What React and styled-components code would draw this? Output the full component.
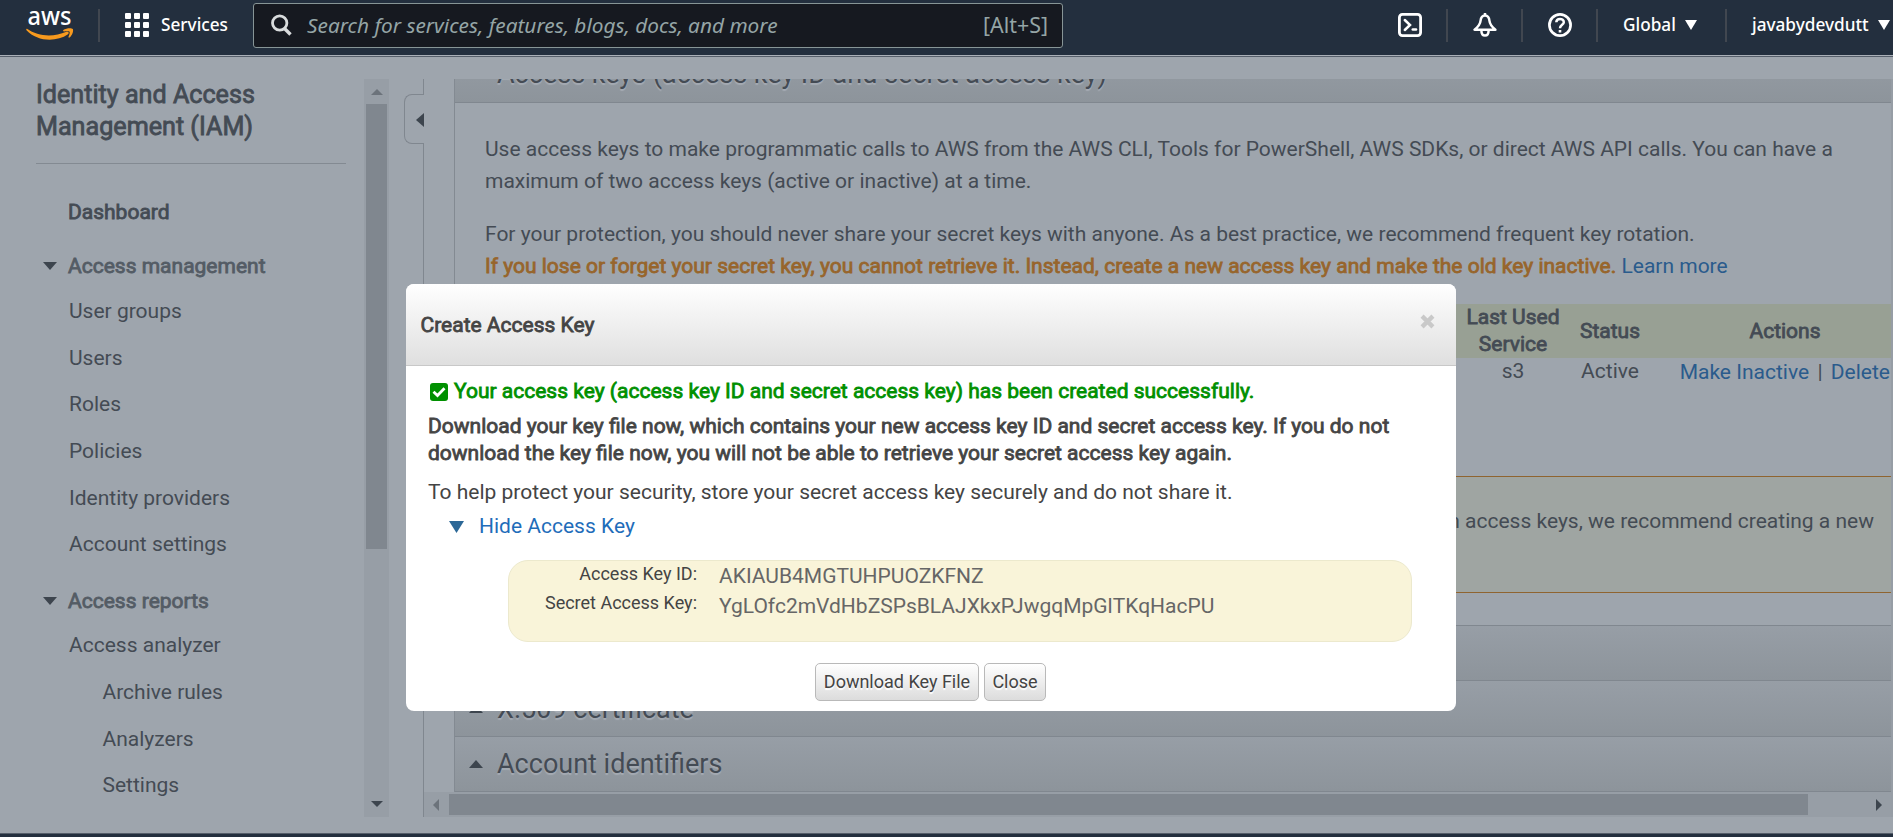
import React from "react";
import styled, { createGlobalStyle, css } from "styled-components";

const Global = createGlobalStyle`
  * { box-sizing: border-box; }
  body { margin: 0; background: #9ea5ad; overflow: hidden; }
  a { text-decoration: none; }
  svg { display: block; flex: none; }
`;

const emphasis = css`
  font-weight: 400;
  -webkit-text-stroke: 0.8px currentColor;
`;

const Page = styled.div`
  position: relative;
  width: 1893px;
  height: 837px;
  overflow: hidden;
  display: flex;
  flex-direction: column;
  background: #9ea5ad;
  color: #444b54;
  font: 400 21px/27px Roboto, "Liberation Sans", sans-serif;
`;

/* ---------- top navigation ---------- */
const TopBar = styled.header`
  height: 55px;
  flex: none;
  display: flex;
  align-items: flex-start;
  padding-top: 3px;
  background: #232f3e;
  color: #fff;
  font: 500 17.2px/24px "Noto Sans", "Open Sans", sans-serif;
`;
const TopRule = styled.div`
  height: 2px;
  flex: none;
  background: #555e6a;
  border-top: 1px solid #a9afb7;
`;
const Logo = styled.div`
  width: 98px;
  padding: 4px 0 0 25px;
`;
const NavDivider = styled.span`
  flex: none;
  width: 2px;
  height: 33px;
  margin-top: 6px;
  background: #414750;
`;
const ServicesButton = styled.div`
  width: 153px;
  height: 44px;
  display: flex;
  align-items: center;
  gap: 12px;
  padding-left: 25px;
`;
const SearchBox = styled.div`
  width: 810px;
  height: 45px;
  display: flex;
  align-items: center;
  padding: 0 14px 2px 17px;
  background: #161920;
  border: 1px solid #879596;
  border-radius: 3px;
  color: #95a5a6;
  font-weight: 400;
  font-size: 20.8px;
`;
const Placeholder = styled.span`
  flex: 1;
  margin-left: 15px;
  font-style: italic;
  white-space: nowrap;
`;
const Shortcut = styled.span`
  font-size: 21.4px;
`;
const NavRight = styled.div`
  flex: 1;
  display: flex;
  justify-content: flex-end;
`;
const NavIcon = styled.div`
  width: 73px;
  height: 44px;
  display: flex;
  align-items: center;
  justify-content: center;
`;
const NavMenu = styled.div`
  width: ${(p) => p.$w}px;
  height: 44px;
  display: flex;
  align-items: center;
  gap: 9px;
  padding-left: 25px;
  white-space: nowrap;
`;

/* ---------- body ---------- */
const Body = styled.div`
  height: 760px;
  margin-top: 22px;
  flex: none;
  display: flex;
  align-items: flex-start;
`;
const Sidebar = styled.aside`
  width: 364px;
  height: 738px;
  padding-left: 36px;
  white-space: nowrap;
`;
const SideTitle = styled.h2`
  ${emphasis}
  width: 310px;
  height: 85px;
  margin: 0 0 33px;
  font-size: 25.15px;
  line-height: 32.2px;
  border-bottom: 1px solid #838a92;
`;
const Dashboard = styled.div`
  ${emphasis}
  height: 30px;
  margin-bottom: 18px;
  padding-left: 32px;
  line-height: 30px;
`;
const NavGroup = styled.div`
  ${emphasis}
  display: flex;
  align-items: center;
  gap: 11px;
  height: 42px;
  margin-top: ${(p) => p.$top || 0}px;
  padding-left: 7px;
  color: #545c65;
`;
const LinkList = styled.div`
  padding-top: ${(p) => p.$top || 0}px;
`;
const NavLink = styled.a`
  display: block;
  height: 46.7px;
  line-height: 46.7px;
  padding-left: ${(p) => (p.$sub ? 66.5 : 33)}px;
  color: #444b54;
`;
const VScroll = styled.div`
  width: 25px;
  height: 738px;
  display: flex;
  flex-direction: column;
  align-items: center;
  justify-content: space-between;
  padding: 10px 0;
  background: #979ea6;
`;
const VThumb = styled.div`
  width: 21px;
  height: 445px;
  margin: 9px 0 auto;
  background: #80878f;
`;
const Rail = styled.div`
  width: 35px;
  height: 738px;
  margin-right: 30px;
  padding-left: 15px;
  display: flex;
  flex-direction: column;
`;
const RailLine = styled.div`
  width: 20px;
  height: ${(p) => p.$h}px;
  border-right: 1px solid #80878f;
`;
const RailTab = styled.div`
  width: 20px;
  height: 50px;
  display: flex;
  align-items: center;
  justify-content: flex-end;
  padding-top: 2px;
  border: 1px solid #80878f;
  border-right: 0;
  border-radius: 8px 0 0 8px;
`;
const MainColumn = styled.main`
  width: 1437px;
  height: 738px;
  display: flex;
  flex-direction: column;
`;
const Panel = styled.div`
  height: 713px;
  overflow: hidden;
  border-left: 1px solid #838a92;
`;
const Section = styled.div`
  height: ${(p) => p.$h || 55}px;
  display: flex;
  align-items: center;
  gap: 14px;
  padding-left: 14px;
  margin-top: ${(p) => p.$top || 0}px;
  background: linear-gradient(#979ea6, #8d949b);
  border-bottom: 1px solid #80878f;
  font-size: 27px;
  line-height: 36px;
  white-space: nowrap;
  text-shadow: 0 2px 1px #a5abb3;
`;
const SectionContent = styled.div`
  height: 523px;
  padding-top: 31px;
  border-bottom: 1px solid #80878f;
`;
const Paragraph = styled.p`
  margin: 0 0 22px 30px;
  line-height: 31.6px;
  white-space: nowrap;
`;
const Warning = styled.span`
  ${emphasis}
  color: #97652c;
`;
const Link = styled.a`
  color: #2a5b8c;
`;
const KeyTable = styled.div`
  height: 172px;
  margin-left: 30px;
`;
const KeyRow = styled.div`
  display: grid;
  grid-template-columns: 973px 110px 84px 1fr;
  align-items: ${(p) => (p.$head ? "center" : "start")};
  height: ${(p) => (p.$head ? 54 : 40)}px;
  text-align: center;
  white-space: nowrap;
  ${(p) => p.$head && emphasis}
  ${(p) => p.$head && css`background: #98a094;`}
`;
const Cell = styled.div`
  grid-column: ${(p) => p.$col};
  padding-left: ${(p) => p.$inset || 0}px;
`;
const Actions = styled.div`
  grid-column: 4;
  display: flex;
  justify-content: flex-end;
  gap: 8.3px;
  padding: 1px 1px 0 0;
`;
const Notice = styled.div`
  height: 117px;
  margin-left: 30px;
  padding: 31px 17px 0 0;
  background: #9fa5a2;
  border: solid #8f6430;
  border-width: 1px 0;
  text-align: right;
  white-space: nowrap;
`;
const HScroll = styled.div`
  width: 1467px;
  height: 25px;
  margin-left: -30px;
  padding: 0 9px;
  display: flex;
  align-items: center;
  background: #979ea6;
`;
const HThumb = styled.div`
  width: 1359px;
  height: 21px;
  margin: 0 auto 0 10px;
  background: #80878f;
`;
const EdgeStrip = styled.div`
  flex: 1;
  height: 738px;
  background: #969da5;
`;
const Footer = styled.footer`
  height: 4px;
  flex: none;
  margin-top: -6px;
  background: #232f3e;
  border-top: 1px solid #555e6a;
`;

/* ---------- dialog ---------- */
const Dialog = styled.div`
  position: absolute;
  left: 406px;
  top: 284px;
  width: 1050px;
  height: 427px;
  display: flex;
  flex-direction: column;
  background: #fff;
  border-radius: 8px;
  color: #444;
  white-space: nowrap;
`;
const DialogHeader = styled.div`
  height: 82px;
  display: flex;
  align-items: center;
  justify-content: space-between;
  padding: 0 21px 0 14.5px;
  border-radius: 8px 8px 0 0;
  border-bottom: 1px solid #c8c8c8;
  background: linear-gradient(#fff, #dfdfdf);
`;
const DialogTitle = styled.h3`
  ${emphasis}
  margin: 0;
  padding-top: 2px;
  font-size: 21px;
`;
const CloseButton = styled.div`
  padding-bottom: 6px;
`;
const DialogBody = styled.div`
  padding: 12px 22px 0;
`;
const Success = styled.div`
  ${emphasis}
  display: flex;
  align-items: center;
  gap: 6px;
  padding-left: 2px;
  color: #009000;
`;
const Strong = styled.p`
  ${emphasis}
  margin: 8px 0 12px;
`;
const Toggle = styled.a`
  display: flex;
  align-items: center;
  gap: 15px;
  margin-top: 7px;
  padding-left: 21px;
  color: #1f6dba;
`;
const KeyBox = styled.div`
  width: 904px;
  height: 82px;
  margin: 20px 0 21px 80px;
  padding-left: 35px;
  background: #f9f4d9;
  border: 1px solid #ece9cd;
  border-radius: 20px;
`;
const KeyLine = styled.div`
  display: grid;
  grid-template-columns: 153px 1fr;
  column-gap: 22px;
  height: 30px;
`;
const KeyLabel = styled.span`
  font-size: 18px;
  line-height: ${(p) => p.$lh}px;
  text-align: right;
`;
const KeyValue = styled.span`
  color: #666;
  line-height: 30px;
`;
const ButtonRow = styled.div`
  display: flex;
  gap: 5px;
  margin-left: 387px;
`;
const Button = styled.button`
  width: ${(p) => p.$w}px;
  height: 38px;
  padding: 0;
  border: 1px solid #b9b9b9;
  border-radius: 5px;
  background: linear-gradient(#fff, #dcdcdc);
  color: #444;
  font: 400 18px/24px Roboto, "Liberation Sans", sans-serif;
  text-shadow: 0 2px 1px #fff;
`;

/* ---------- drawings ---------- */
const Triangle = ({ dir = "down", w = 14, h = 8, color = "#3d454e" }) => {
  const points = {
    down: `0,0 ${w},0 ${w / 2},${h}`,
    up: `0,${h} ${w},${h} ${w / 2},0`,
    left: `${w},0 ${w},${h} 0,${h / 2}`,
    right: `0,0 0,${h} ${w},${h / 2}`,
  };
  return (
    <svg width={w} height={h}>
      <polygon points={points[dir]} fill={color} />
    </svg>
  );
};

const AwsLogo = () => (
  <svg width="50" height="34" viewBox="0 0 50 34" overflow="visible">
    <text x="2.5" y="18.3" fill="#fff" fontFamily="Noto Sans, sans-serif" fontSize="25.5" fontWeight="500" textLength="44" lengthAdjust="spacingAndGlyphs">aws</text>
    <path d="M2 21.800 C13 29.500 28 30.500 41.500 24.800 C43.500 24.100 44.500 25.800 43 27.200 C31 35.500 12 34.500 1.500 23.200 C1 22.300 1.300 21.400 2 21.800 Z" fill="#f79a1e" />
    <path d="M38.300 23 C41.500 21 46.500 20.900 47.800 22 C48.800 23.800 47.200 28.400 44.600 30.600 C43.800 31 43.200 30.500 43.500 29.800 C44.400 27.700 45 25.400 44.600 24.700 C44 24 41.600 24.100 39 24.500 C38.200 24.500 37.900 23.600 38.300 23 Z" fill="#f79a1e" />
  </svg>
);

const GridIcon = () => (
  <svg width="24" height="24" fill="#fff">
    {[0, 9, 18].map((y) => [0, 9, 18].map((x) => <rect key={x + "-" + y} x={x} y={y} width="6" height="6" rx="1" />))}
  </svg>
);

const SearchIcon = () => (
  <svg width="21" height="22" viewBox="0 0 21 22" fill="none" stroke="#d9dcdd" strokeWidth="2.8">
    <circle cx="8.7" cy="9" r="7.2" />
    <path d="M13.500 14.500 L19.500 20.500" strokeWidth="3.400" />
  </svg>
);

const ShellIcon = () => (
  <svg width="24" height="24" viewBox="0 0 24 24" fill="none" stroke="#fff" strokeWidth="2.8">
    <rect x="1.400" y="1.400" width="21.200" height="21.200" rx="3" />
    <path d="M6.800 7 L12 12 L6.800 17" strokeWidth="2.500" strokeLinecap="round" />
    <path d="M14.800 16.500 H18" strokeWidth="2.600" strokeLinecap="round" />
  </svg>
);

const BellIcon = () => (
  <svg width="24" height="24" viewBox="0 0 24 24" fill="none" stroke="#fff" strokeWidth="2.500" strokeLinejoin="round">
    <path d="M12 0 V3" />
    <path d="M12 2.500 C9 2.500 7.800 5 7.500 8 C7.200 11.500 5.500 13.500 1.600 16.700 H22.400 C18.500 13.500 16.800 11.500 16.500 8 C16.200 5 15 2.500 12 2.500 Z" />
    <path d="M8.400 17.500 C8.400 24.300 15.600 24.300 15.600 17.500" />
  </svg>
);

const HelpIcon = () => (
  <svg width="24" height="24" viewBox="0 0 24 24" fill="none" stroke="#fff" strokeWidth="2.700">
    <circle cx="12" cy="12" r="10.600" />
    <path d="M8.300 9.300 C8.300 4.700 15.900 4.800 15.800 9.200 C15.800 11.800 12 11.800 12 15.300" strokeWidth="2.500" />
    <rect x="10.700" y="17" width="2.600" height="2.500" fill="#fff" stroke="none" />
  </svg>
);

const CheckIcon = () => (
  <svg width="18" height="18" viewBox="0 0 18 18">
    <rect width="18" height="18" rx="3" fill="#009000" />
    <path d="M3.500 8.700 L7.500 12.500 L14.500 5.300" fill="none" stroke="#fff" strokeWidth="2.800" />
  </svg>
);

const CloseIcon = () => (
  <svg width="15" height="15" viewBox="0 0 16 15" stroke="#c9c9c9" strokeWidth="4.600">
    <path d="M2.200 1.800 L13.800 13.200 M13.800 1.800 L2.200 13.200" />
  </svg>
);

export default function App() {
  return (
    <Page>
      <Global />
      <TopBar>
        <Logo><AwsLogo /></Logo>
        <NavDivider />
        <ServicesButton><GridIcon />Services</ServicesButton>
        <SearchBox>
          <SearchIcon />
          <Placeholder>Search for services, features, blogs, docs, and more</Placeholder>
          <Shortcut>[Alt+S]</Shortcut>
        </SearchBox>
        <NavRight>
          <NavIcon><ShellIcon /></NavIcon>
          <NavDivider />
          <NavIcon><BellIcon /></NavIcon>
          <NavDivider />
          <NavIcon><HelpIcon /></NavIcon>
          <NavDivider />
          <NavMenu $w={127}>Global<Triangle w={12} h={10} color="#fff" /></NavMenu>
          <NavDivider />
          <NavMenu $w={166}>javabydevdutt<Triangle w={12} h={10} color="#fff" /></NavMenu>
        </NavRight>
      </TopBar>
      <TopRule />

      <Body>
        <Sidebar>
          <SideTitle>Identity and Access<br />Management (IAM)</SideTitle>
          <Dashboard>Dashboard</Dashboard>
          <NavGroup><Triangle />Access management</NavGroup>
          <LinkList $top={1}>
            <NavLink>User groups</NavLink>
            <NavLink>Users</NavLink>
            <NavLink>Roles</NavLink>
            <NavLink>Policies</NavLink>
            <NavLink>Identity providers</NavLink>
            <NavLink>Account settings</NavLink>
          </LinkList>
          <NavGroup $top={12}><Triangle />Access reports</NavGroup>
          <LinkList>
            <NavLink>Access analyzer</NavLink>
            <NavLink $sub>Archive rules</NavLink>
            <NavLink $sub>Analyzers</NavLink>
            <NavLink $sub>Settings</NavLink>
          </LinkList>
        </Sidebar>
        <VScroll>
          <Triangle dir="up" w={12} h={6} color="#6c737b" />
          <VThumb />
          <Triangle w={12} h={6} />
        </VScroll>
        <Rail>
          <RailLine $h={15} />
          <RailTab><Triangle dir="left" w={8} h={14} /></RailTab>
          <RailLine $h={673} />
        </Rail>
        <MainColumn>
          <Panel>
            <Section $top={-34} $h={58}>
              <Triangle />Access keys (access key ID and secret access key)
            </Section>
            <SectionContent>
              <Paragraph>
                Use access keys to make programmatic calls to AWS from the AWS CLI, Tools for PowerShell, AWS SDKs, or direct AWS API calls. You can have a<br />
                maximum of two access keys (active or inactive) at a time.
              </Paragraph>
              <Paragraph>
                For your protection, you should never share your secret keys with anyone. As a best practice, we recommend frequent key rotation.<br />
                <Warning>If you lose or forget your secret key, you cannot retrieve it. Instead, create a new access key and make the old key inactive.</Warning>{" "}
                <Link>Learn more</Link>
              </Paragraph>
              <KeyTable>
                <KeyRow $head>
                  <Cell $col={2}>Last Used<br />Service</Cell>
                  <Cell $col={3}>Status</Cell>
                  <Cell $col={4} $inset={27}>Actions</Cell>
                </KeyRow>
                <KeyRow>
                  <Cell $col={2}>s3</Cell>
                  <Cell $col={3}>Active</Cell>
                  <Actions><Link>Make Inactive</Link><span>|</span><Link>Delete</Link></Actions>
                </KeyRow>
              </KeyTable>
              <Notice>n access keys, we recommend creating a new</Notice>
            </SectionContent>
            <Section />
            <Section $h={56}><Triangle dir="up" />X.509 certificate</Section>
            <Section><Triangle dir="up" />Account identifiers</Section>
          </Panel>
          <HScroll>
            <Triangle dir="left" w={6} h={12} color="#6c737b" />
            <HThumb />
            <Triangle dir="right" w={6} h={12} />
          </HScroll>
        </MainColumn>
        <EdgeStrip />
      </Body>
      <Footer />

      <Dialog role="dialog">
        <DialogHeader>
          <DialogTitle>Create Access Key</DialogTitle>
          <CloseButton><CloseIcon /></CloseButton>
        </DialogHeader>
        <DialogBody>
          <Success><CheckIcon />Your access key (access key ID and secret access key) has been created successfully.</Success>
          <Strong>
            Download your key file now, which contains your new access key ID and secret access key. If you do not<br />
            download the key file now, you will not be able to retrieve your secret access key again.
          </Strong>
          <div>To help protect your security, store your secret access key securely and do not share it.</div>
          <Toggle><Triangle w={15} h={12} color="#2c6897" />Hide Access Key</Toggle>
          <KeyBox>
            <KeyLine><KeyLabel $lh={26}>Access Key ID:</KeyLabel><KeyValue>AKIAUB4MGTUHPUOZKFNZ</KeyValue></KeyLine>
            <KeyLine><KeyLabel $lh={24}>Secret Access Key:</KeyLabel><KeyValue>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</KeyValue></KeyLine>
          </KeyBox>
          <ButtonRow>
            <Button $w={164}>Download Key File</Button>
            <Button $w={62}>Close</Button>
          </ButtonRow>
        </DialogBody>
      </Dialog>
    </Page>
  );
}
